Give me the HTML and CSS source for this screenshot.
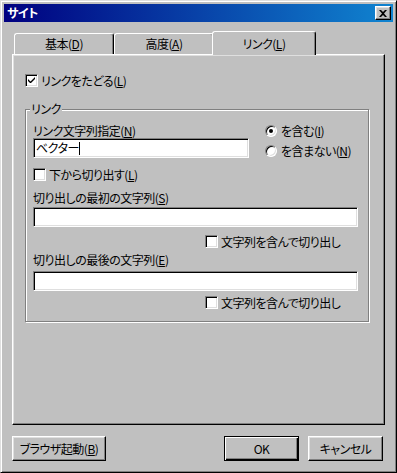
FILE: index.html
```html
<!DOCTYPE html>
<html>

<head>
  <meta name="viewport" content="width=device-width, initial-scale=1">
  <link rel="stylesheet" href="styles.css">
</head>

<body>

  <div class="window">
    <div class="titlebar">
      <span class="title">サイト</span>
      <button class="close">
        <svg width="8" height="7" viewBox="0 0 8 7">
          <path d="M0 0 L2 0 L4 2 L6 0 L8 0 L5 3.5 L8 7 L6 7 L4 5 L2 7 L0 7 L3 3.5 Z" fill="#000" />
        </svg>
      </button>
    </div>

    <div class="tabs">
      <div class="tab">基本(<u>D</u>)</div>
      <div class="tab">高度(<u>A</u>)</div>
      <div class="tab active">リンク(<u>L</u>)</div>
    </div>

    <div class="panel">
      <div class="check">
        <span class="box">
          <svg width="7" height="7" viewBox="0 0 7 7">
            <path d="M0 2 L0 4 L2 6 L3 6 L7 2 L7 0 L2.5 4.5 Z" fill="#000" />
          </svg>
        </span>
        <span>リンクをたどる(<u>L</u>)</span>
      </div>

      <fieldset class="group">
        <legend>リンク</legend>

        <div class="link-row">
          <div class="field-col">
            <div class="label">リンク文字列指定(<u>N</u>)</div>
            <div class="field">ベクター<span class="caret"></span></div>
          </div>
          <div class="radios">
            <div class="radio"><span class="dot on"></span><span>を含む(<u>I</u>)</span></div>
            <div class="radio"><span class="dot"></span><span>を含まない(<u>N</u>)</span></div>
          </div>
        </div>

        <div class="check from-end">
          <span class="box"></span>
          <span>下から切り出す(<u>L</u>)</span>
        </div>

        <div class="label label-gap">切り出しの最初の文字列(<u>S</u>)</div>
        <div class="field wide"></div>
        <div class="check sub-check first-sub">
          <span class="box"></span>
          <span>文字列を含んで切り出し</span>
        </div>

        <div class="label label-gap2">切り出しの最後の文字列(<u>E</u>)</div>
        <div class="field wide"></div>
        <div class="check sub-check last-sub">
          <span class="box"></span>
          <span>文字列を含んで切り出し</span>
        </div>
      </fieldset>
    </div>

    <div class="buttons">
      <button class="btn browser">ブラウザ起動(<u>B</u>)</button>
      <span class="spacer"></span>
      <button class="btn default">OK</button>
      <button class="btn cancel">キャンセル</button>
    </div>
  </div>

</body>

</html>
```

FILE: styles.css
```css
* {
  box-sizing: border-box;
}

body {
  margin: 0;
  background: #c0c0c0;
  color: #000;
  font: 12px/14px "Noto Sans CJK JP", "Noto Sans", sans-serif;
  font-feature-settings: "palt";
  letter-spacing: -0.5px;
}

button {
  font: inherit;
  font-feature-settings: inherit;
  letter-spacing: inherit;
  color: inherit;
}

.window {
  width: 397px;
  height: 473px;
  padding: 3px;
  border: 1px solid;
  border-color: #dfdfdf #000 #000 #dfdfdf;
  box-shadow: inset 1px 1px #fff, inset -1px -1px #808080;
  display: flex;
  flex-direction: column;
}

/* title bar */
.titlebar {
  height: 18px;
  display: flex;
  align-items: center;
  justify-content: space-between;
  padding: 0 2px 0 3px;
  background: linear-gradient(to right, #000080, #1084d0);
}

.title {
  color: #fff;
  font-weight: bold;
}

.close {
  width: 16px;
  height: 14px;
  padding: 0;
  display: flex;
  align-items: center;
  justify-content: center;
  background: #c0c0c0;
  border: 1px solid;
  border-color: #fff #000 #000 #fff;
  box-shadow: inset -1px -1px #808080, inset 1px 1px #dfdfdf;
}

/* tabs */
.tabs {
  display: flex;
  align-items: flex-end;
  height: 23px;
  margin-top: 9px;
  padding-left: 10px;
}

.tab {
  width: 100px;
  height: 21px;
  display: flex;
  align-items: center;
  justify-content: center;
  border: 1px solid;
  border-bottom: none;
  border-color: #fff #000 transparent #fff;
  border-radius: 3px 3px 0 0;
  box-shadow: inset -1px 0 #808080;
}

.tab.active {
  width: 104px;
  height: 24px;
  margin: 0 -2px -1px;
  position: relative;
  z-index: 1;
  background: #c0c0c0;
}

/* panel */
.panel {
  height: 371px;
  margin: 0 8px;
  padding: 18px 0 0 12px;
  border: 1px solid;
  border-color: #fff #000 #000 #fff;
  box-shadow: inset -1px -1px #808080, inset 1px 1px #dfdfdf;
}

.check {
  display: flex;
  align-items: center;
  gap: 3px;
  height: 15px;
}

.box {
  width: 13px;
  height: 13px;
  flex: none;
  display: flex;
  align-items: center;
  justify-content: center;
  background: #fff;
  border: 1px solid;
  border-color: #808080 #fff #fff #808080;
  box-shadow: inset 1px 1px #000, inset -1px -1px #dfdfdf;
}

.group {
  width: 344px;
  margin: 14px 0 0;
  padding: 8px 0 11px 7px;
  border: 1px solid #808080;
  box-shadow: inset 1px 1px #fff, 1px 1px #fff;
}

.group legend {
  margin-left: -3px;
  padding: 0 1px;
  background: #c0c0c0;
}

.link-row {
  display: flex;
}

.field-col {
  width: 216px;
}

.label {
  height: 14px;
}

.field {
  height: 20px;
  display: flex;
  align-items: center;
  padding: 0 2px;
  background: #fff;
  border: 1px solid;
  border-color: #808080 #fff #fff #808080;
  box-shadow: inset 1px 1px #000, inset -1px -1px #dfdfdf;
}

.field.wide {
  width: 325px;
}

.caret {
  width: 1px;
  height: 13px;
  background: #000;
}

.radios {
  margin-left: 16px;
  display: flex;
  flex-direction: column;
  gap: 6px;
}

.radio {
  height: 14px;
  display: flex;
  align-items: center;
  gap: 4px;
}

.dot {
  width: 12px;
  height: 12px;
  display: flex;
  align-items: center;
  justify-content: center;
  border-radius: 50%;
  background: #fff;
  border: 1px solid;
  border-color: #808080 #fff #fff #808080;
  box-shadow: inset 1px 1px #000, inset -1px -1px #dfdfdf;
}

.dot.on::after {
  content: "";
  width: 4px;
  height: 4px;
  border-radius: 50%;
  background: #000;
}

.from-end {
  margin-top: 9px;
}

.label-gap {
  margin-top: 9px;
  margin-bottom: 2px;
}

.sub-check {
  margin-left: 172px;
}

.first-sub {
  margin-top: 7px;
}

.label-gap2 {
  margin-top: 4px;
  margin-bottom: 4px;
}

.last-sub {
  margin-top: 4px;
}

/* bottom buttons */
.buttons {
  display: flex;
  height: 25px;
  margin: 11px 10px 0 8px;
}

.spacer {
  flex: 1;
}

.btn {
  height: 25px;
  padding: 0;
  background: #c0c0c0;
  border: 1px solid;
  border-color: #fff #000 #000 #fff;
  box-shadow: inset -1px -1px #808080, inset 1px 1px #dfdfdf;
}

.btn.browser {
  width: 94px;
}

.btn.default {
  width: 75px;
  border-color: #000;
  box-shadow: inset 1px 1px #fff, inset -1px -1px #000, inset -2px -2px #808080;
}

.btn.cancel {
  width: 75px;
  margin-left: 9px;
}
```
